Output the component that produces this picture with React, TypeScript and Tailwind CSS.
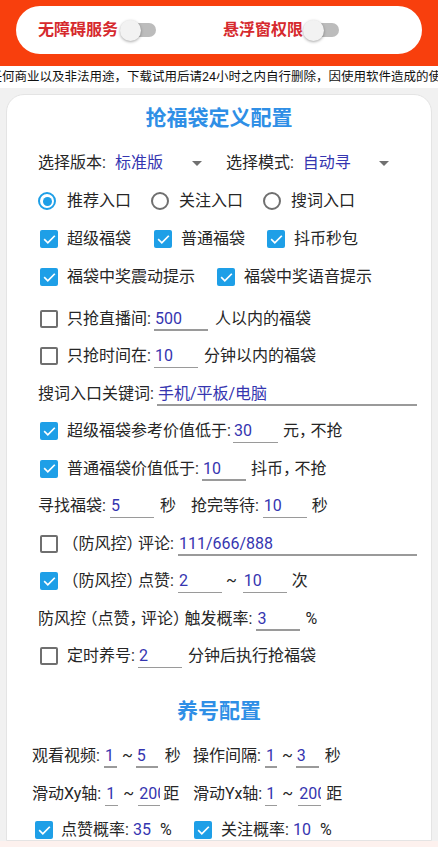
import React from "react";

const FONT = "font-['Roboto','Noto_Sans_CJK_SC',sans-serif]";

function Check({ on }: { on: boolean }) {
  return on ? (
    <span className="w-[18px] h-[18px] rounded-[2px] bg-[#1e9fe7] flex items-center justify-center shrink-0">
      <svg width="15" height="15" viewBox="0 0 24 24">
        <path d="M4.5 12.5l4.8 4.8L19.5 7" fill="none" stroke="white" strokeWidth="2.8" strokeLinecap="square" />
      </svg>
    </span>
  ) : (
    <span className="block w-[18px] h-[18px] rounded-[2px] border-2 border-[#6f6f6f] bg-white shrink-0" />
  );
}

function Radio({ on }: { on: boolean }) {
  return on ? (
    <span className="w-[18px] h-[18px] rounded-full border-2 border-[#1e9fe7] flex items-center justify-center shrink-0">
      <span className="block w-[9px] h-[9px] rounded-full bg-[#1e9fe7]" />
    </span>
  ) : (
    <span className="block w-[18px] h-[18px] rounded-full border-2 border-[#6f6f6f] shrink-0" />
  );
}

function Inp({ v, cls, line = true }: { v: string; cls: string; line?: boolean }) {
  return (
    <span
      className={`relative block shrink-0 h-[24px] leading-[24px] pl-[1px] text-[#3535b0] whitespace-nowrap overflow-hidden ${cls}`}
    >
      {v}
      {line && <span className="absolute left-0 right-0 bottom-[0px] h-[1.5px] bg-[#9a9a9a]" />}
    </span>
  );
}

function Arrow() {
  return (
    <svg width="10" height="5" viewBox="0 0 10 5" className="shrink-0">
      <path d="M0 0h10L5 5z" fill="#707070" />
    </svg>
  );
}

function Switch() {
  return (
    <span className="relative w-[36px] h-[22px] flex items-center shrink-0">
      <span className="absolute left-[6px] right-0 h-[14px] rounded-full bg-[#bcbcbc]" />
      <span className="absolute left-0 w-[21px] h-[21px] rounded-full bg-[#f2f2f2] shadow-[0_1px_3px_rgba(0,0,0,0.35)]" />
    </span>
  );
}

const LP = () => <span className="ml-[3.5px] [font-feature-settings:'halt']">（</span>;
const RP = () => <span className="mr-[3.5px] [font-feature-settings:'halt']">）</span>;
const CM = () => <span className="mr-[3.5px] [font-feature-settings:'halt']">，</span>;

export default function App() {
  return (
    <div className={`${FONT} w-full h-[847px] flex flex-col overflow-hidden bg-[#f1f1f1] text-[#262626]`}>
      {/* header */}
      <div className="h-[66px] shrink-0 bg-[#f83f0d] px-[16px] pt-[6px]">
        <div className="h-[48px] rounded-[24px] bg-white flex items-center pl-[22px] text-[16px] font-bold text-[#d62a2e]">
          <span>无障碍服务</span>
          <span className="ml-[2px]">
            <Switch />
          </span>
          <span className="ml-[67px]">悬浮窗权限</span>
          <span className="ml-[0px]">
            <Switch />
          </span>
        </div>
      </div>

      {/* marquee */}
      <div className="h-[22px] shrink-0 bg-white flex items-center overflow-hidden whitespace-nowrap text-[12.5px] text-[#111]">
        <span className="-ml-[10.5px]">任何商业以及非法用途，下载试用后请24小时之内自行删除，因使用软件造成的使用后果概不负责</span>
      </div>

      {/* main */}
      <div className="flex-1 overflow-hidden pt-[6px] px-[6px]">
        <div className="h-full bg-white rounded-t-[18px] border border-[#e4e4e4] pt-[9px] pl-[31px] text-[16px]">
          <div className="h-[30px] flex items-center justify-center pr-[31px] text-[21px] font-semibold text-[#2f8fe6]">
            抢福袋定义配置
          </div>

          <div className="mt-[10px]">
            {/* row 1 */}
            <div className="h-[38px] flex items-center">
              <span>选择版本:</span>
              <span className="ml-[9px] w-[97px] pr-[10px] flex items-center justify-between">
                <span className="text-[#3535b0]">标准版</span>
                <Arrow />
              </span>
              <span className="ml-[14px]">选择模式:</span>
              <span className="ml-[9px] w-[96px] pr-[10px] flex items-center justify-between">
                <span className="text-[#3535b0]">自动寻</span>
                <Arrow />
              </span>
            </div>

            {/* row 2 radios */}
            <div className="h-[38px] flex items-center">
              <Radio on />
              <span className="ml-[11px]">推荐入口</span>
              <span className="ml-[20px]">
                <Radio on={false} />
              </span>
              <span className="ml-[10px]">关注入口</span>
              <span className="ml-[20px]">
                <Radio on={false} />
              </span>
              <span className="ml-[10px]">搜词入口</span>
            </div>

            {/* row 3 */}
            <div className="h-[38px] flex items-center pl-[2px]">
              <Check on />
              <span className="ml-[9px]">超级福袋</span>
              <span className="ml-[23px]">
                <Check on />
              </span>
              <span className="ml-[9px]">普通福袋</span>
              <span className="ml-[22px]">
                <Check on />
              </span>
              <span className="ml-[9px]">抖币秒包</span>
            </div>

            {/* row 4 */}
            <div className="h-[38px] flex items-center pl-[2px]">
              <Check on />
              <span className="ml-[9px]">福袋中奖震动提示</span>
              <span className="ml-[22px]">
                <Check on />
              </span>
              <span className="ml-[9px]">福袋中奖语音提示</span>
            </div>

            {/* row 5 */}
            <div className="mt-[4px] h-[37.5px] flex items-center pl-[2px]">
              <Check on={false} />
              <span className="ml-[9px]">只抢直播间:</span>
              <span className="ml-[3px]">
                <Inp v="500" cls="w-[54px]" />
              </span>
              <span className="ml-[7px]">人以内的福袋</span>
            </div>

            {/* row 6 */}
            <div className="h-[37.5px] flex items-center pl-[2px]">
              <Check on={false} />
              <span className="ml-[9px]">只抢时间在:</span>
              <span className="ml-[3px]">
                <Inp v="10" cls="w-[44px]" />
              </span>
              <span className="ml-[6px]">分钟以内的福袋</span>
            </div>

            {/* row 7 */}
            <div className="h-[37.5px] flex items-center">
              <span>搜词入口关键词:</span>
              <span className="ml-[3px]">
                <Inp v="手机/平板/电脑" cls="w-[260px]" />
              </span>
            </div>

            {/* row 8 */}
            <div className="h-[37.5px] flex items-center pl-[2px]">
              <Check on />
              <span className="ml-[9px]">超级福袋参考价值低于:</span>
              <span className="ml-[2px]">
                <Inp v="30" cls="w-[45px]" />
              </span>
              <span className="ml-[5px]">
                元<CM />不抢
              </span>
            </div>

            {/* row 9 */}
            <div className="h-[37.5px] flex items-center pl-[2px]">
              <Check on />
              <span className="ml-[9px]">普通福袋价值低于:</span>
              <span className="ml-[3px]">
                <Inp v="10" cls="w-[44px]" />
              </span>
              <span className="ml-[5px]">
                抖币<CM />不抢
              </span>
            </div>

            {/* row 10 */}
            <div className="h-[37.5px] flex items-center">
              <span>寻找福袋:</span>
              <span className="ml-[4px]">
                <Inp v="5" cls="w-[44px]" />
              </span>
              <span className="ml-[6px]">秒</span>
              <span className="ml-[15px]">抢完等待:</span>
              <span className="ml-[4px]">
                <Inp v="10" cls="w-[44px]" />
              </span>
              <span className="ml-[5px]">秒</span>
            </div>

            {/* row 11 */}
            <div className="h-[37.5px] flex items-center pl-[2px]">
              <Check on={false} />
              <span className="ml-[9px]">
                <LP />
                防风控
                <RP />
                评论:
              </span>
              <span className="ml-[4px]">
                <Inp v="111/666/888" cls="w-[239px]" />
              </span>
            </div>

            {/* row 12 */}
            <div className="h-[37.5px] flex items-center pl-[2px]">
              <Check on />
              <span className="ml-[9px]">
                <LP />
                防风控
                <RP />
                点赞:
              </span>
              <span className="ml-[4px]">
                <Inp v="2" cls="w-[44px]" />
              </span>
              <span className="ml-[4px]">~</span>
              <span className="ml-[6px]">
                <Inp v="10" cls="w-[44px]" />
              </span>
              <span className="ml-[5px]">次</span>
            </div>

            {/* row 13 */}
            <div className="h-[37.5px] flex items-center">
              <span>
                防风控
                <LP />
                点赞
                <CM />
                评论
                <RP />
                触发概率:
              </span>
              <span className="ml-[4px]">
                <Inp v="3" cls="w-[44px]" />
              </span>
              <span className="ml-[5px]">%</span>
            </div>

            {/* row 14 */}
            <div className="h-[37.5px] flex items-center pl-[2px]">
              <Check on={false} />
              <span className="ml-[9px]">定时养号:</span>
              <span className="ml-[3px]">
                <Inp v="2" cls="w-[44px]" />
              </span>
              <span className="ml-[6px]">分钟后执行抢福袋</span>
            </div>
          </div>

          {/* section 2 */}
          <div className="mt-[22px] h-[30px] flex items-center justify-center pr-[31px] text-[21px] font-semibold text-[#2f8fe6]">
            养号配置
          </div>

          <div className="mt-[9px] -ml-[6px]">
            <div className="h-[39px] flex items-center">
              <div className="w-[161px] flex items-center">
                <span>观看视频:</span>
                <span className="ml-[4px]">
                  <Inp v="1" cls="w-[13px]" />
                </span>
                <span className="ml-[5px]">~</span>
                <span className="ml-[3px]">
                  <Inp v="5" cls="w-[22px]" />
                </span>
                <span className="ml-[7px]">秒</span>
              </div>
              <div className="flex items-center">
                <span>操作间隔:</span>
                <span className="ml-[4px]">
                  <Inp v="1" cls="w-[12px]" />
                </span>
                <span className="ml-[5px]">~</span>
                <span className="ml-[3px]">
                  <Inp v="3" cls="w-[23px]" />
                </span>
                <span className="ml-[6px]">秒</span>
              </div>
            </div>

            <div className="h-[38px] flex items-center">
              <div className="w-[161px] flex items-center">
                <span>滑动Xy轴:</span>
                <span className="ml-[4px]">
                  <Inp v="1" cls="w-[13px]" />
                </span>
                <span className="ml-[5px]">~</span>
                <span className="ml-[4px]">
                  <Inp v="200" cls="w-[22px]" />
                </span>
                <span className="ml-[3px]">距</span>
              </div>
              <div className="flex items-center">
                <span>滑动Yx轴:</span>
                <span className="ml-[3px]">
                  <Inp v="1" cls="w-[12px]" />
                </span>
                <span className="ml-[5px]">~</span>
                <span className="ml-[5px]">
                  <Inp v="200" cls="w-[23px]" />
                </span>
                <span className="ml-[5px]">距</span>
              </div>
            </div>

            <div className="h-[34px] flex items-center">
              <div className="w-[161px] flex items-center pl-[3px]">
                <Check on />
                <span className="ml-[8px]">点赞概率:</span>
                <span className="ml-[3px]">
                  <Inp v="35" cls="w-[24px]" line={false} />
                </span>
                <span className="ml-[4px]">%</span>
              </div>
              <div className="flex items-center pl-[1px]">
                <Check on />
                <span className="ml-[9px]">关注概率:</span>
                <span className="ml-[3px]">
                  <Inp v="10" cls="w-[23px]" />
                </span>
                <span className="ml-[5px]">%</span>
              </div>
            </div>
          </div>
        </div>
      </div>

      {/* bottom strip */}
      <div className="h-[6px] shrink-0 bg-[#fdf1ee]" />
    </div>
  );
}
